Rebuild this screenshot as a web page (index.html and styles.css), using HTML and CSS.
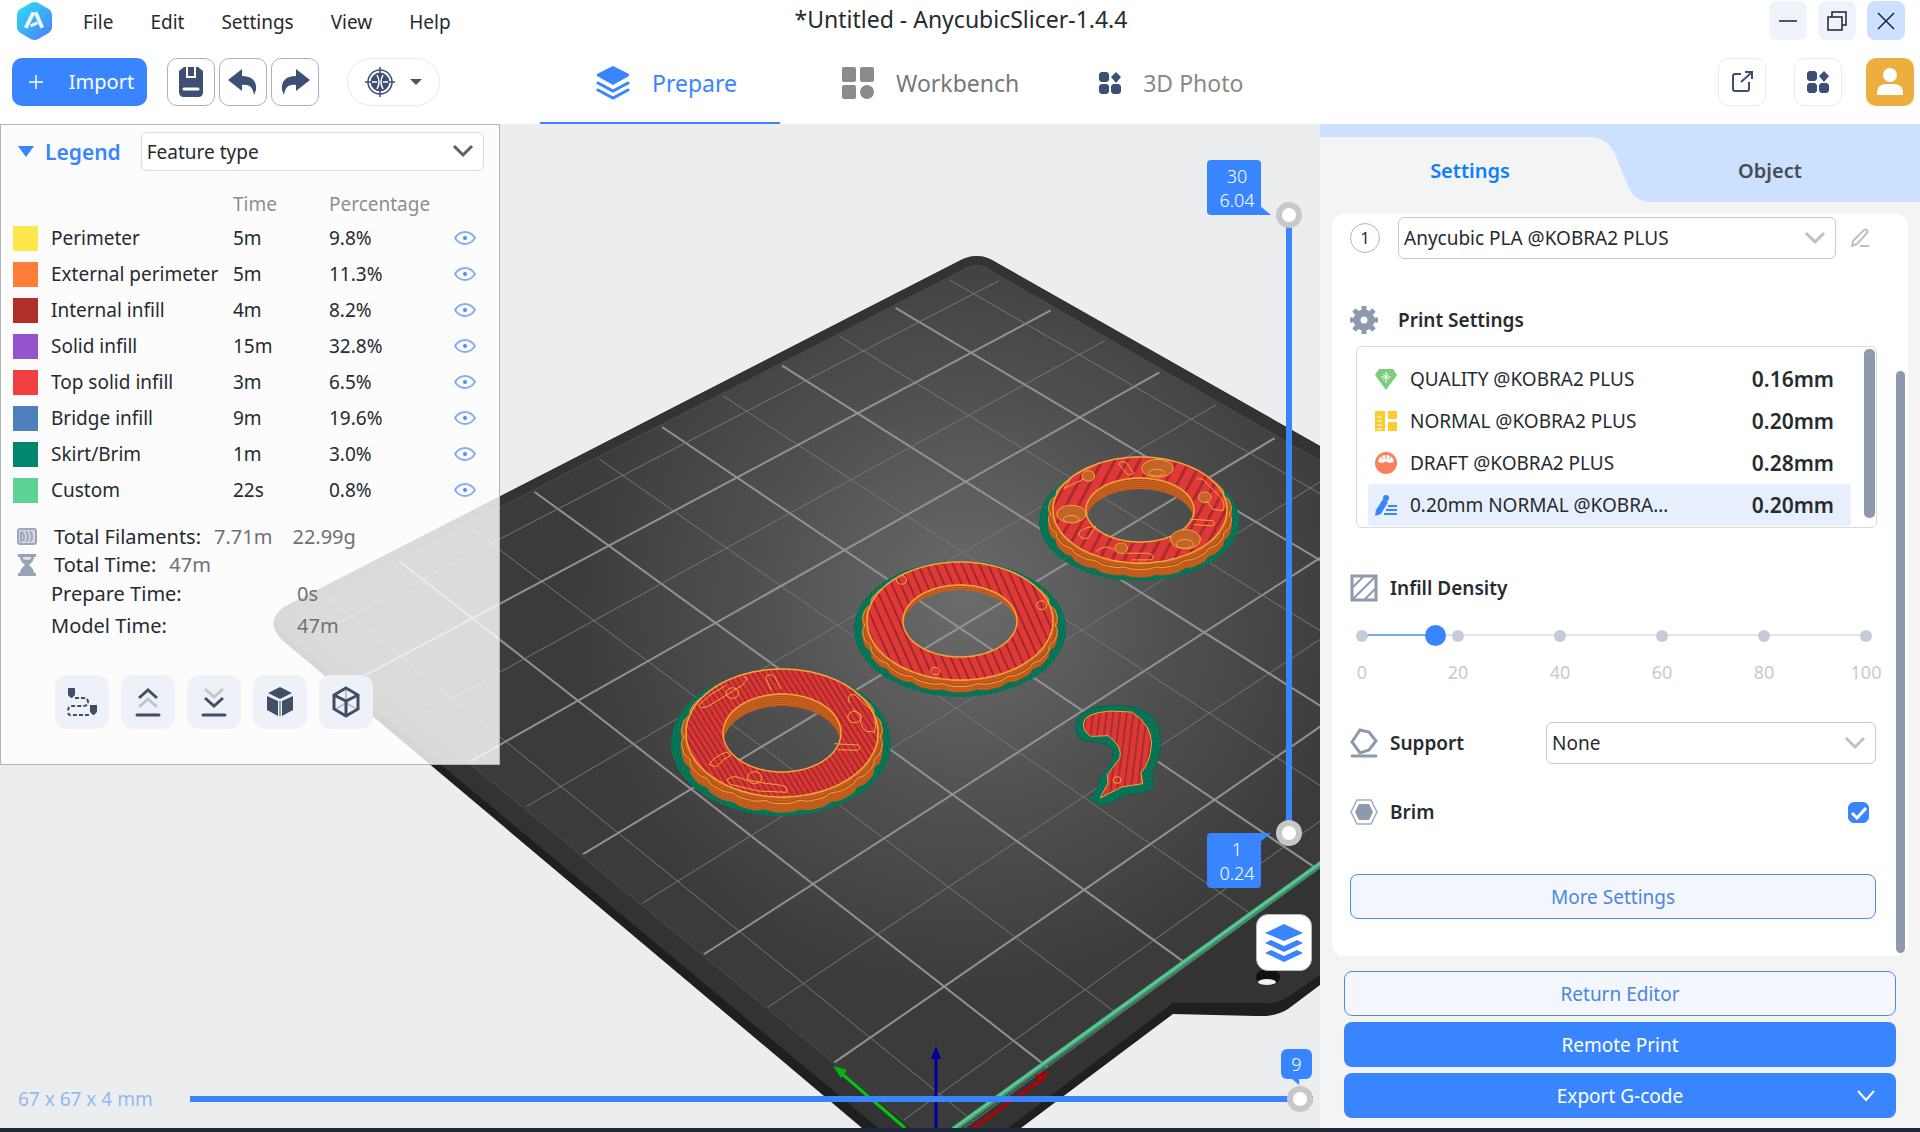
FILE: index.html
```html
<!DOCTYPE html>
<html lang="en">
<head>
    <meta charset="UTF-8">
    <meta name="viewport" content="width=device-width, initial-scale=1.0">
    <title>*Untitled - AnycubicSlicer-1.4.4</title>
    <link rel="stylesheet" href="styles.css">
</head>
<body>

    <!-- shared icons -->
    <svg class="sprite" aria-hidden="true">
        <symbol id="eye" viewBox="0 0 22 14">
            <path d="M1 7C4 2.500 7.500 1 11 1s7 1.500 10 6c-3 4.500-6.500 6-10 6S4 11.500 1 7z" fill="none" stroke="#85aef8" stroke-width="2"/>
            <circle cx="11" cy="7" r="2" fill="#4f8cf5"/>
        </symbol>
        <symbol id="chevron" viewBox="0 0 22 14">
            <path d="M2 2l9 9 9-9" fill="none" stroke="currentColor" stroke-width="3"/>
        </symbol>
        <symbol id="layers" viewBox="0 0 34 34">
            <path d="M17 0l16 8v2l-16 9L1 10V8z" fill="currentColor"/>
            <path d="M2 17l15 8 15-8M2 24l15 8 15-8" fill="none" stroke="currentColor" stroke-width="3" stroke-linecap="round"/>
        </symbol>
        <symbol id="apps" viewBox="0 0 22 22">
            <path d="M2 0h6l2 2v6l-2 2H2L0 8V2zM2 12h6l2 2v6l-2 2H2l-2-2v-6zM14 12h6l2 2v6l-2 2h-6l-2-2v-6zM17 0l5 5-5 6-5-6z" fill="#3d4f75"/>
        </symbol>
        <symbol id="undo" viewBox="0 0 30 28">
            <path d="M0 12L14 1v7c10 0 15 5 14 14l-2 5c-1-7-4-11-12-10v6z" fill="#3d4f75"/>
        </symbol>
    </svg>

    <header class="titlebar">
        <div class="titlebar-left">
            <svg class="logo" viewBox="0 0 36 40">
                <defs>
                    <linearGradient id="logoFill" x1="0" y1="0" x2="1" y2="1">
                        <stop offset="0" stop-color="#2be0f5"/>
                        <stop offset="1" stop-color="#4a7dfb"/>
                    </linearGradient>
                </defs>
                <path d="M15 1q3-1 6 0l12 7q3 2 3 5v14q0 3-3 5l-12 7q-3 1-6 0L3 32q-3-2-3-5V13q0-3 3-5z" fill="url(#logoFill)"/>
                <path d="M17 11L9 27M19 11l7 16" stroke="#eef8ff" stroke-width="4" fill="none"/>
                <path d="M14 25l7-3" stroke="#eef8ff" stroke-width="3"/>
            </svg>
            <nav class="menu">
                <a href="#">File</a>
                <a href="#">Edit</a>
                <a href="#">Settings</a>
                <a href="#">View</a>
                <a href="#">Help</a>
            </nav>
        </div>
        <h1 class="title">*Untitled - AnycubicSlicer-1.4.4</h1>
        <div class="window-buttons">
            <button type="button" aria-label="Minimize"><svg width="20" height="20" viewBox="0 0 20 20"><path d="M1 10h18" stroke="#1c2330" stroke-width="1.500"/></svg></button>
            <button type="button" aria-label="Restore"><svg width="20" height="20" viewBox="0 0 20 20"><path d="M1 6h14v13H1zM5 6V1h14v13h-4" fill="none" stroke="#1c2330" stroke-width="1.500"/></svg></button>
            <button type="button" class="close" aria-label="Close"><svg width="20" height="20" viewBox="0 0 20 20"><path d="M2 2l16 16M18 2L2 18" stroke="#1c2330" stroke-width="1.500"/></svg></button>
        </div>
    </header>

    <div class="toolbar">
        <div class="toolbar-left">
            <button type="button" class="import"><svg width="14" height="14" viewBox="0 0 14 14"><path d="M7 0v14M0 7h14" stroke="#fff" stroke-width="1.500"/></svg>Import</button>
            <div class="tool-group">
                <button type="button" class="tool" aria-label="Save">
                    <svg width="24" height="30" viewBox="0 0 24 30"><path d="M5 0h2v11h10V0h2l5 4v21q0 5-5 5H5q-5 0-5-5V4z" fill="#3d4f75"/><path d="M9 0h6v9H9z" fill="#3d4f75"/><path d="M5 22h14" stroke="#fff" stroke-width="3" stroke-linecap="round"/></svg>
                </button>
                <button type="button" class="tool" aria-label="Undo"><svg width="30" height="28"><use href="#undo"/></svg></button>
                <button type="button" class="tool" aria-label="Redo"><svg class="flip" width="30" height="28"><use href="#undo"/></svg></button>
            </div>
            <button type="button" class="calibrate" aria-label="Calibration">
                <svg width="30" height="30" viewBox="0 0 30 30" fill="none" stroke="#3d4f75">
                    <circle cx="15" cy="15" r="12" stroke-width="1.500"/>
                    <circle cx="15" cy="15" r="9" fill="#3d4f75"/>
                    <path d="M15 0v6M15 24v6M0 15h6M24 15h6" stroke-width="1.500"/>
                    <path d="M12 8q4 7 0 14M18 8q-4 7 0 14M7 15h5M18 15h5" stroke="#fff" stroke-width="1.500"/>
                </svg>
                <svg width="12" height="8" viewBox="0 0 12 8"><path d="M0 1h12L6 7z" fill="#555"/></svg>
            </button>
        </div>
        <nav class="tabs">
            <a href="#" class="tab active"><svg width="34" height="34"><use href="#layers"/></svg>Prepare</a>
            <a href="#" class="tab workbench">
                <svg width="32" height="32" viewBox="0 0 32 32" fill="#8b8b8b"><rect width="14" height="15" rx="2"/><rect x="18" width="14" height="15" rx="2"/><rect y="18" width="14" height="14" rx="2"/><circle cx="25" cy="25" r="7"/></svg>
                Workbench</a>
            <a href="#" class="tab photo"><svg width="22" height="22"><use href="#apps"/></svg>3D Photo</a>
        </nav>
        <div class="toolbar-right">
            <button type="button" class="square" aria-label="Share">
                <svg width="22" height="22" viewBox="0 0 22 22" fill="none" stroke="#3d4f75" stroke-width="2"><path d="M10 3H4Q2 3 2 5v13q0 2 2 2h12q2 0 2-2v-7M10 11l10-9M14 1h7v7"/></svg>
            </button>
            <button type="button" class="square" aria-label="Apps"><svg width="22" height="22"><use href="#apps"/></svg></button>
            <button type="button" class="square avatar" aria-label="Account">
                <svg width="26" height="28" viewBox="0 0 26 28" fill="#fff"><circle cx="13" cy="7" r="7"/><path d="M0 27v-4q1-6 8-7h10q7 1 8 7v4z"/></svg>
            </button>
        </div>
    </div>

    <main class="workspace">
        <section class="viewport">
            <!-- print bed, grid and sliced parts are added by scene.js -->
            <svg class="scene" viewBox="0 124 1320 1004" preserveAspectRatio="xMidYMid slice">
                <defs>
                    <radialGradient id="bedFill" gradientUnits="userSpaceOnUse" cx="965" cy="600" r="400">
                        <stop offset="0" stop-color="#6b6b6b"/>
                        <stop offset="0.500" stop-color="#515151"/>
                        <stop offset="1" stop-color="#3b3b3b"/>
                    </radialGradient>
                    <pattern id="fine" width="5" height="5" patternUnits="userSpaceOnUse" patternTransform="rotate(-32)">
                        <rect width="5" height="5" fill="#dc3636"/><rect width="2" height="5" fill="#a82a2a"/>
                    </pattern>
                    <pattern id="medium" width="8" height="8" patternUnits="userSpaceOnUse" patternTransform="rotate(-24)">
                        <rect width="8" height="8" fill="#de3838"/><rect width="2" height="8" fill="#a22828"/>
                    </pattern>
                    <pattern id="wide" width="11" height="11" patternUnits="userSpaceOnUse" patternTransform="rotate(28)">
                        <rect width="11" height="11" fill="#e03838"/><rect width="3" height="11" fill="#aa2b2b"/>
                    </pattern>
                    <pattern id="straight" width="17" height="17" patternUnits="userSpaceOnUse" patternTransform="rotate(6)">
                        <rect width="17" height="17" fill="#dc3838"/><rect width="5" height="17" fill="#a82c2c"/>
                    </pattern>
                    <pattern id="brim" width="3" height="3" patternUnits="userSpaceOnUse" patternTransform="rotate(12)">
                        <rect width="3" height="3" fill="#087a5b"/><rect width="1" height="3" fill="#06664c"/>
                    </pattern>
                </defs>

                <path d="M963 259q14-6 27 0L1320 446v539l-32 24q-12 8-32 7l-83-2L1021 1128H862L282 640q-18-18 2-33z" fill="#1f1f1f"/>
                <path d="M963 259q14-6 27 0L1320 446v529l-32 22q-10 7-24 6h-91L1008 1128H878L284 634q-16-16 2-28z" fill="#333"/>
                <path d="M967 268q10-5 19 0L1630 640 937 1148 300 624q-12-8 0-14z" fill="url(#bedFill)" stroke="#4d4d4d"/>
                <g id="grid"></g>
                <ellipse cx="1268" cy="977" rx="12" ry="8" fill="#111"/>
                <ellipse cx="1267" cy="982" rx="9" ry="3" fill="#f2f2f2"/>
                <path d="M953 1130L1322 863" stroke="#389066" stroke-width="6"/>
                <path d="M953 1129L1322 862" stroke="#5cc592" stroke-width="3"/>
                <path d="M905 1128l-64-55" stroke="#00c80f" stroke-width="3"/>
                <path d="M833 1066l14 4-6 8z" fill="#00b40f"/>
                <path d="M973 1128l68-48" stroke="#b80000" stroke-width="3"/>
                <path d="M1049 1072l-14 3 6 8z" fill="#b00000"/>
                <path d="M936 1130v-72" stroke="#00009c" stroke-width="3"/>
                <path d="M936 1046l5 13h-10z" fill="#00009c"/>
                <g id="parts"></g>

                <!-- the small hook part and the pockets on the rings, in a finer unit -->
                <g class="details" transform="translate(640 440) scale(0.395 0.333)">
                    <path class="skirt" d="M1102 855Q1110 805 1180 798 1265 790 1295 830 1325 870 1317 925 1312 970 1296 1000L1300 1042Q1290 1060 1240 1062L1175 1097Q1150 1095 1137 1075 1160 1060 1162 1015 1200 970 1198 930 1180 905 1125 905 1100 890 1102 855z"/>
                    <path class="hook" d="M1123 850Q1125 820 1190 814L1245 817Q1295 855 1295 910 1292 970 1268 1000L1273 1032 1220 1042 1165 1075 1185 1030 1183 1005 1215 955Q1222 920 1185 888L1142 890Q1120 875 1123 850z"/>
                    <circle cx="1208" cy="1021" r="10"/>
                    <path d="M318 712q12-14 24 0l14 36M332 752l-14-40M175 975q12-25 45-38l10 10q-24 14-36 34zM492 912l60 4q8 8 0 16l-50-2M262 712q20-2-5 26l-85 62q-22 10-22-5l28-30 40-28"/>
                    <circle cx="234" cy="760" r="16"/><circle cx="543" cy="832" r="17"/><circle cx="290" cy="1014" r="18"/>
                    <path d="M530 790q-8-30 14-25l38 42q20 30 12 70l-22-2q-20-25-12-45l-22-25M220 1020q16-18 44 0l60 12q50 4 48 16v10l-72-4-72-20z"/>
                    <circle cx="662" cy="420" r="13"/><circle cx="1017" cy="496" r="13"/><circle cx="747" cy="694" r="11"/>
                    <g class="pocket">
                        <ellipse cx="1310" cy="85" rx="40" ry="27"/><ellipse cx="1308" cy="98" rx="20" ry="10"/>
                        <ellipse cx="1092" cy="222" rx="37" ry="26"/><ellipse cx="1092" cy="238" rx="20" ry="11"/>
                        <ellipse cx="1381" cy="298" rx="38" ry="29"/><ellipse cx="1379" cy="312" rx="22" ry="13"/>
                        <circle cx="1135" cy="108" r="16"/><circle cx="1430" cy="172" r="16"/><circle cx="1218" cy="325" r="16"/>
                    </g>
                    <path d="M1212 72q10-14 22 0l16 28-14 6zM1110 280q14-20 44-20l-20 34q-18 8-24-14zM1392 238l58 4q8 8 0 16l-48-4M1165 68l-70 40-22 38 52-30M1410 118q14-8 26 14l32 38q16 20 8 42l-26-4-16-26M1155 335q20-24 44-6M1232 340l55 0q20 8 8 20l-50 0"/>
                </g>
            </svg>

            <section class="legend">
                <div class="legend-head">
                    <button type="button" class="legend-toggle"><svg width="16" height="11" viewBox="0 0 16 11"><path d="M0 0h16L8 11z" fill="#3985ff"/></svg>Legend</button>
                    <span class="select">
                        <select aria-label="Color by"><option>Feature type</option></select>
                        <svg width="22" height="14"><use href="#chevron"/></svg>
                    </span>
                </div>
                <table>
                    <thead>
                        <tr><th></th><th></th><th>Time</th><th>Percentage</th><th></th></tr>
                    </thead>
                    <tbody>
                        <tr><td><i class="swatch perimeter"></i></td><td>Perimeter</td><td>5m</td><td>9.8%</td><td><svg width="22" height="14"><use href="#eye"/></svg></td></tr>
                        <tr><td><i class="swatch external"></i></td><td>External perimeter</td><td>5m</td><td>11.3%</td><td><svg width="22" height="14"><use href="#eye"/></svg></td></tr>
                        <tr><td><i class="swatch internal"></i></td><td>Internal infill</td><td>4m</td><td>8.2%</td><td><svg width="22" height="14"><use href="#eye"/></svg></td></tr>
                        <tr><td><i class="swatch solid"></i></td><td>Solid infill</td><td>15m</td><td>32.8%</td><td><svg width="22" height="14"><use href="#eye"/></svg></td></tr>
                        <tr><td><i class="swatch top"></i></td><td>Top solid infill</td><td>3m</td><td>6.5%</td><td><svg width="22" height="14"><use href="#eye"/></svg></td></tr>
                        <tr><td><i class="swatch bridge"></i></td><td>Bridge infill</td><td>9m</td><td>19.6%</td><td><svg width="22" height="14"><use href="#eye"/></svg></td></tr>
                        <tr><td><i class="swatch skirt-brim"></i></td><td>Skirt/Brim</td><td>1m</td><td>3.0%</td><td><svg width="22" height="14"><use href="#eye"/></svg></td></tr>
                        <tr><td><i class="swatch custom"></i></td><td>Custom</td><td>22s</td><td>0.8%</td><td><svg width="22" height="14"><use href="#eye"/></svg></td></tr>
                    </tbody>
                </table>
                <div class="totals">
                    <p>
                        <svg width="20" height="18" viewBox="0 0 20 18" fill="none" stroke="#9fa6bb" stroke-width="2"><rect x="1" y="1" width="18" height="15" rx="2" fill="#d4d8e2"/><path d="M4 4v9q4-1 3-5t-3-4M9 3q4 6 0 11M13 3q4 6 0 11"/></svg>
                        Total Filaments:<span>7.71m</span><span class="weight">22.99g</span>
                    </p>
                    <p>
                        <svg width="20" height="22" viewBox="0 0 20 22" fill="#98a1b5"><path d="M1 0h18v3h-2q0 4-5 8 5 4 5 8h2v3H1v-3h2q0-4 5-8-5-4-5-8H1z"/><path d="M6 3h8v2q-4 2-8 0z" fill="#dfe2ea"/></svg>
                        Total Time:<span>47m</span>
                    </p>
                </div>
                <dl class="times">
                    <dt>Prepare Time:</dt><dd>0s</dd>
                    <dt>Model Time:</dt><dd>47m</dd>
                </dl>
                <div class="view-buttons">
                    <button type="button" aria-label="Travel moves">
                        <svg width="30" height="30" viewBox="0 0 30 30"><path d="M1 1h7v7l-3 3h-1L1 8zM23 18h7v7l-3 3h-1l-3-3z" fill="#3f4f66"/><path d="M8 11h8q5 0 5 4t-5 4H5q-4 0-4 5t4 4h17" fill="none" stroke="#3f4f66" stroke-width="2" stroke-dasharray="4 2"/></svg>
                    </button>
                    <button type="button" aria-label="Layer up">
                        <svg width="26" height="30" viewBox="0 0 26 30" fill="none" stroke-width="3"><path d="M4 11l9-8 9 8" stroke="#3f4f66"/><path d="M4 20l9-8 9 8" stroke="#c2c6cb"/><path d="M2 28h22" stroke="#3f4f66" stroke-linecap="round"/></svg>
                    </button>
                    <button type="button" aria-label="Layer down">
                        <svg width="26" height="30" viewBox="0 0 26 30" fill="none" stroke-width="3"><path d="M4 2l9 8 9-8" stroke="#c2c6cb"/><path d="M4 11l9 8 9-8" stroke="#3f4f66"/><path d="M2 28h22" stroke="#3f4f66" stroke-linecap="round"/></svg>
                    </button>
                    <button type="button" aria-label="Shells">
                        <svg width="28" height="30" viewBox="0 0 28 30" fill="#3f4f66"><path d="M14 0l12 6-12 6L2 6zM1 9l11 5v15L1 23zM27 9l-11 5v15l11-6z"/><path d="M14 14v15" fill="none" stroke="#3f4f66"/></svg>
                    </button>
                    <button type="button" aria-label="Wireframe">
                        <svg width="30" height="32" viewBox="0 0 30 32" fill="none" stroke-width="3"><path d="M15 2v14M3 24l12-7 12 7" stroke="#b9c0ca" stroke-width="2"/><path d="M15 2l12 7v14l-12 7-12-7V9zM3 9l12 6 12-6M15 15v15" stroke="#3f4f66"/></svg>
                    </button>
                </div>
            </section>

            <div class="layer-slider">
                <output class="tip tip-top">30<br>6.04</output>
                <output class="tip tip-bottom">1<br>0.24</output>
                <input type="range" class="upper" min="1" max="30" value="30" aria-label="Top layer">
                <input type="range" class="lower" min="1" max="30" value="1" aria-label="Bottom layer">
            </div>
            <button type="button" class="layers-button" aria-label="Layers">
                <svg width="38" height="38" viewBox="0 0 38 38" fill="#3985ff"><path d="M19 0l19 9-19 8L0 9zM0 19l6-3 13 6 13-6 6 3-19 9zM0 29l6-3 13 6 13-6 6 3-19 9z"/></svg>
            </button>
            <div class="move-slider">
                <label for="moves">67 x 67 x 4 mm</label>
                <input type="range" id="moves" min="1" max="9" value="9">
                <output class="tip tip-move">9</output>
            </div>
        </section>

        <aside class="panel">
            <nav class="panel-tabs">
                <svg viewBox="0 0 600 78" preserveAspectRatio="none"><path d="M0 13h270q18 1 25 17l13 32q6 16 24 16H0z" fill="#f4f4f4"/></svg>
                <a href="#" class="active">Settings</a>
                <a href="#">Object</a>
            </nav>
            <div class="card">
                <div class="filament">
                    <span class="number">1</span>
                    <span class="select">
                        <select aria-label="Filament"><option>Anycubic PLA @KOBRA2 PLUS</option></select>
                        <svg width="22" height="14"><use href="#chevron"/></svg>
                    </span>
                    <button type="button" aria-label="Edit filament"><svg width="20" height="20" viewBox="0 0 20 20" fill="none" stroke="#c0c0c0" stroke-width="2"><path d="M2 18l1-5L14 2q2-1 3 0t0 3L7 16zM10 18h9"/></svg></button>
                </div>

                <h2 class="print-title">
                    <svg width="28" height="28" viewBox="0 0 28 28"><circle cx="14" cy="14" r="7" fill="none" stroke="#8e99af" stroke-width="7"/><path d="M14 0v5M14 23v5M0 14h5M23 14h5M4 4l4 4M20 20l4 4M24 4l-4 4M4 24l4-4" stroke="#8e99af" stroke-width="5"/></svg>
                    Print Settings
                </h2>
                <ul class="profiles">
                    <li>
                        <svg width="22" height="22" viewBox="0 0 22 22"><path d="M4 1h14l4 6-11 15L0 7z" fill="#7bcf7c"/><path d="M11 4v11M6 9h10M8 6l6 6M14 6l-6 6" stroke="#fff"/></svg>
                        <a href="#">QUALITY @KOBRA2 PLUS</a><b>0.16mm</b>
                    </li>
                    <li>
                        <svg width="22" height="22" viewBox="0 0 22 22" fill="#fbcb2f"><path d="M0 1h10v20H0zM13 1h9v8h-9zM13 12h9v9h-9z"/><path d="M2 7h5M2 11h5M2 15h5M2 19h5" stroke="#fff"/></svg>
                        <a href="#">NORMAL @KOBRA2 PLUS</a><b>0.20mm</b>
                    </li>
                    <li>
                        <svg width="22" height="22" viewBox="0 0 22 22"><circle cx="11" cy="11" r="11" fill="#f97f5f"/><path d="M3 10q1-7 8-7t8 7l-5 1q-3-3-6 0z" fill="#fff"/><path d="M11 2v5M6 4l2 3M16 4l-2 3" stroke="#f97f5f"/></svg>
                        <a href="#">DRAFT @KOBRA2 PLUS</a><b>0.28mm</b>
                    </li>
                    <li class="selected">
                        <svg width="22" height="22" viewBox="0 0 22 22" fill="#3985ff"><circle cx="11" cy="4" r="3"/><path d="M8 5l5 3-7 12-6 2 1-6z"/><path d="M13 12h9M11 16h11M9 20h13" stroke="#3985ff" stroke-width="2"/></svg>
                        <a href="#">0.20mm NORMAL @KOBRA…</a><b>0.20mm</b>
                    </li>
                </ul>

                <label class="setting-title infill-title" for="infill">
                    <svg width="28" height="28" viewBox="0 0 28 28" fill="none" stroke="#8e99af" stroke-width="2"><path d="M2 2h24v24H2z" stroke-width="3"/><path d="M3 13L13 3M3 25L25 3M15 25l10-10"/></svg>
                    Infill Density
                </label>
                <div class="infill">
                    <div class="ticks"><i></i><i></i><i></i><i></i><i></i><i></i></div>
                    <input type="range" id="infill" min="0" max="100" value="14">
                    <div class="tick-labels"><span>0</span><span>20</span><span>40</span><span>60</span><span>80</span><span>100</span></div>
                </div>

                <div class="setting support">
                    <label class="setting-title" for="support">
                        <svg width="28" height="30" viewBox="0 0 28 30" fill="none" stroke="#8e99af" stroke-width="3"><path d="M10 2l9 2 7 9-7 9-9 3-8-11z"/><path d="M2 28h24" stroke-linecap="round"/></svg>
                        Support
                    </label>
                    <span class="select">
                        <select id="support"><option>None</option></select>
                        <svg width="22" height="14"><use href="#chevron"/></svg>
                    </span>
                </div>
                <div class="setting brim">
                    <label class="setting-title" for="brimOn">
                        <svg width="28" height="26" viewBox="0 0 28 26"><path d="M7 1h14l6 12-6 12H7L1 13z" fill="none" stroke="#a3abbd" stroke-width="1.500"/><path d="M9 5h10l4 8-4 8H9l-4-8z" fill="#8e99af"/></svg>
                        Brim
                    </label>
                    <span class="check">
                        <input type="checkbox" id="brimOn" checked>
                        <svg width="16" height="14" viewBox="0 0 16 14"><path d="M1 7l5 5 9-10" fill="none" stroke="#fff" stroke-width="3"/></svg>
                    </span>
                </div>
                <button type="button" class="action outline more">More Settings</button>
                <span class="scrollbar"></span>
            </div>
            <div class="actions">
                <button type="button" class="action outline">Return Editor</button>
                <button type="button" class="action">Remote Print</button>
                <button type="button" class="action">Export G-code<svg width="18" height="12" viewBox="0 0 18 12"><path d="M1 1l8 9 8-9" fill="none" stroke="#fff" stroke-width="2"/></svg></button>
            </div>
        </aside>
    </main>

    <script src="scene.js"></script>
</body>
</html>
```
FILE: styles.css
```css
* {
    box-sizing: border-box;
}
body {
    margin: 0;
    min-height: 100vh;
    display: flex;
    flex-direction: column;
    background: #fff;
    border-bottom: 4px solid #1c2a38;
    font-family: "Noto Sans", "Open Sans", sans-serif;
    font-size: 19px;
    line-height: 28px;
    color: #262b30;
}
h1, h2, p, ul, dl, dd {
    margin: 0;
    padding: 0;
}
button, select {
    font: inherit;
    color: inherit;
    background: none;
    border: none;
    padding: 0;
}
button {
    cursor: pointer;
    display: flex;
    align-items: center;
    justify-content: center;
}
a {
    color: inherit;
    text-decoration: none;
}
svg {
    display: block;
    flex: none;
}
.sprite {
    position: absolute;
    width: 0;
    height: 0;
}

/* title bar */
.titlebar {
    display: grid;
    grid-template-columns: 1fr auto 1fr;
    height: 42px;
    padding: 1px 15px 0 17px;
}
.titlebar-left {
    display: flex;
    gap: 31px;
}
.logo {
    width: 35px;
    height: 40px;
}
.menu {
    display: flex;
    align-items: center;
    gap: 37px;
}
.title {
    font-size: 23px;
    font-weight: 400;
    line-height: 36px;
}
.window-buttons {
    display: flex;
    justify-content: flex-end;
    gap: 11px;
}
.window-buttons button {
    width: 38px;
    height: 39px;
    border-radius: 8px;
    background: #f0f2fa;
}
.window-buttons .close {
    background: #cce0ff;
}

/* toolbar */
.toolbar {
    display: flex;
    height: 82px;
    padding-right: 6px;
}
.toolbar-left {
    display: flex;
    flex: none;
    width: 540px;
    padding: 16px 0 0 12px;
}
.import {
    width: 135px;
    height: 48px;
    gap: 26px;
    padding-left: 4px;
    border-radius: 10px;
    background: #3985ff;
    color: #fff;
    font-size: 20px;
}
.tool-group {
    display: flex;
    gap: 4px;
    margin: 0 28px 0 20px;
}
.tool {
    width: 48px;
    height: 48px;
    border: 1px solid #a9b1c4;
    border-radius: 10px;
}
.flip {
    transform: scaleX(-1);
}
.calibrate {
    width: 93px;
    height: 48px;
    gap: 15px;
    border: 1px solid #e8e9ec;
    border-radius: 24px;
}
.tabs {
    display: flex;
    font-size: 23px;
    color: #777;
}
.tab {
    display: flex;
    align-items: center;
    gap: 22px;
}
.tab.active {
    width: 240px;
    padding-left: 56px;
    border-bottom: 2px solid #3985ff;
    border-top: 2px solid transparent;
    color: #3985ff;
}
.workbench {
    margin-left: 62px;
}
.photo {
    margin-left: 80px;
    color: #888;
}
.toolbar-right {
    display: flex;
    gap: 28px;
    margin-left: auto;
    padding-top: 16px;
}
.square {
    width: 48px;
    height: 48px;
    border: 1px solid #ececee;
    border-radius: 10px;
}
.avatar {
    margin-left: -4px;
    background: #eeae3f;
    border: none;
}

/* 3D view */
.workspace {
    flex: 1;
    display: flex;
}
.viewport {
    position: relative;
    flex: 1;
    min-width: 0;
    overflow: hidden;
    background: #ecedef;
}
.scene {
    position: absolute;
    inset: 0;
    width: 100%;
    height: 100%;
}
.thin {
    stroke: #777;
    stroke-width: 1;
}
.bold {
    stroke: #929292;
    stroke-width: 2;
}
.details path, .details circle, .details ellipse {
    fill: none;
    stroke: #f5a53a;
    stroke-width: 1;
    vector-effect: non-scaling-stroke;
}
.details .pocket ellipse, .details .pocket circle {
    fill: #c2632a;
}
.details .skirt {
    fill: url(#brim);
    stroke: #06664c;
}
.details .hook {
    fill: url(#straight);
}

/* legend */
.legend {
    position: absolute;
    top: 0;
    left: 0;
    width: 500px;
    height: 641px;
    padding: 7px 15px 0 12px;
    border: 1px solid #b0b4bb;
    background: rgba(255, 255, 255, 0.82);
}
.legend-head {
    display: flex;
    align-items: center;
    gap: 20px;
    padding-left: 5px;
}
.legend-toggle {
    gap: 11px;
    font-size: 21px;
    font-weight: 600;
    color: #3985ff;
}
.select {
    position: relative;
    flex: 1;
    display: block;
    color: #bfc0c4;
}
.select select {
    appearance: none;
    display: block;
    width: 100%;
    height: 42px;
    padding: 0 40px 0 5px;
    border: 1px solid #c3c9d6;
    border-radius: 6px;
    background: #fff;
    color: #262b30;
}
.select svg {
    position: absolute;
    right: 10px;
    top: 14px;
    pointer-events: none;
}
.legend .select {
    color: #5c6068;
}
.legend .select select {
    height: 39px;
    border-color: #d8dae2;
}
.legend .select svg {
    top: 12px;
}
.legend table {
    width: 100%;
    margin-top: 17px;
    border-collapse: collapse;
    table-layout: fixed;
}
.legend th, .legend td {
    height: 36px;
    padding: 0;
    text-align: left;
    font-weight: 400;
    white-space: nowrap;
}
.legend th {
    height: 32px;
    color: #8c8f92;
}
.legend th:nth-child(1) {
    width: 38px;
}
.legend th:nth-child(2) {
    width: 182px;
}
.legend th:nth-child(3) {
    width: 96px;
}
.legend th:nth-child(4) {
    width: 125px;
}
.swatch {
    display: block;
    width: 25px;
    height: 25px;
}
.perimeter { background: #ffe64d; }
.external { background: #ff7d38; }
.internal { background: #b03029; }
.solid { background: #9654cc; }
.top { background: #f04040; }
.bridge { background: #4d80ba; }
.skirt-brim { background: #00876e; }
.custom { background: #5ed194; }
.totals {
    margin-top: 15px;
    padding-left: 4px;
    font-size: 20px;
}
.totals p {
    display: flex;
    align-items: center;
}
.totals p svg {
    margin-right: 17px;
}
.totals span {
    margin-left: 13px;
    color: #6e7173;
}
.totals .weight {
    margin-left: 20px;
}
.times {
    display: grid;
    grid-template-columns: 246px 1fr;
    row-gap: 4px;
    margin-top: 1px;
    padding-left: 38px;
    font-size: 20px;
}
.times dd {
    color: #6e7173;
}
.view-buttons {
    display: flex;
    gap: 12px;
    margin: 35px 0 0 42px;
}
.view-buttons button {
    width: 54px;
    height: 54px;
    border-radius: 12px;
    background: #eff1f8;
}

/* sliders over the view */
input[type="range"] {
    appearance: none;
    margin: 0;
    background: none;
}
.layer-slider input::-webkit-slider-thumb, .move-slider input::-webkit-slider-thumb {
    appearance: none;
    width: 26px;
    height: 26px;
    border: 6px solid #c8c8ca;
    border-radius: 50%;
    background: #fff;
    pointer-events: auto;
}
.layer-slider {
    position: absolute;
    top: 78px;
    right: 18px;
    width: 26px;
    height: 644px;
    background: linear-gradient(#3985ff, #3985ff) center / 6px 620px no-repeat;
}
.layer-slider input {
    position: absolute;
    inset: 0;
    width: 26px;
    height: 100%;
    writing-mode: vertical-lr;
    direction: rtl;
    pointer-events: none;
}
.tip {
    position: absolute;
    background: #3985ff;
    border-radius: 4px;
    color: #fff;
    font-size: 18px;
    font-weight: 300;
    line-height: 24px;
    text-align: center;
}
.tip::after {
    content: "";
    position: absolute;
    width: 12px;
    height: 10px;
    background: #3985ff;
}
.layer-slider .tip {
    right: 41px;
    width: 54px;
    padding: 4px 0 3px 6px;
}
.tip-top {
    top: -42px;
}
.tip-bottom {
    bottom: -42px;
}
.tip-top::after {
    right: -10px;
    bottom: 0;
    clip-path: polygon(0 0, 100% 100%, 0 100%);
}
.tip-bottom::after {
    right: -10px;
    top: 0;
    clip-path: polygon(0 0, 100% 0, 0 100%);
}
.layers-button {
    position: absolute;
    right: 8px;
    bottom: 157px;
    width: 56px;
    height: 57px;
    border: 1px solid #b8b8b8;
    border-radius: 12px;
    background: #fff;
}
.move-slider {
    position: absolute;
    left: 18px;
    right: 7px;
    bottom: 15px;
    display: flex;
    align-items: center;
}
.move-slider label {
    width: 172px;
    color: #94b8f3;
}
.move-slider input {
    flex: 1;
    height: 26px;
    background: linear-gradient(#3985ff, #3985ff) center / 100% 6px no-repeat;
}
.tip-move {
    right: 1px;
    bottom: 34px;
    width: 31px;
    padding: 3px 0;
    border-radius: 6px;
}
.tip-move::after {
    right: 8px;
    bottom: -6px;
    height: 6px;
    clip-path: polygon(0 0, 60% 0, 60% 100%);
}

/* settings panel */
.panel {
    display: flex;
    flex-direction: column;
    flex: none;
    width: 600px;
    background: #f4f4f4;
}
.panel-tabs {
    position: relative;
    display: flex;
    height: 78px;
    padding-top: 14px;
    background: #cce0ff;
    font-size: 20px;
    font-weight: 600;
    color: #474d54;
}
.panel-tabs svg {
    position: absolute;
    inset: 0;
    width: 100%;
    height: 100%;
}
.panel-tabs a {
    position: relative;
    flex: 1;
    line-height: 66px;
    text-align: center;
}
.panel-tabs .active {
    color: #0a80ff;
}
.card {
    position: relative;
    flex: 1;
    margin: 12px 12px 15px;
    padding: 3px 32px 36px 18px;
    border-radius: 12px;
    background: #fff;
}
.filament {
    display: flex;
    align-items: center;
    gap: 14px;
    margin-right: 6px;
}
.number {
    width: 30px;
    height: 30px;
    margin-right: 4px;
    border: 1px solid #b5b5b5;
    border-radius: 50%;
    font-size: 16px;
    text-align: center;
}
.print-title, .setting-title {
    display: flex;
    align-items: center;
    gap: 12px;
    font-size: 19px;
    font-weight: 600;
}
.print-title {
    gap: 20px;
    margin-top: 47px;
}
.profiles {
    position: relative;
    list-style: none;
    margin: 12px -1px 0 6px;
    height: 182px;
    padding: 11px 25px 0 11px;
    border: 1px solid #d9dbe0;
    border-radius: 6px;
}
.profiles::after {
    content: "";
    position: absolute;
    right: 1px;
    top: 2px;
    width: 11px;
    height: 169px;
    border-radius: 5px;
    background: #8e99af;
}
.profiles li {
    display: flex;
    align-items: center;
    height: 42px;
    padding: 0 17px 0 7px;
    border-radius: 4px;
}
.profiles li svg {
    margin-right: 13px;
}
.profiles b {
    margin-left: auto;
    font-size: 21px;
    font-weight: 600;
}
.profiles .selected {
    background: #e7effd;
}
.infill-title {
    margin-top: 46px;
}
.infill {
    position: relative;
    margin: 23px 4px 0 6px;
}
.infill::before {
    content: "";
    position: absolute;
    top: 9px;
    left: 6px;
    width: 504px;
    height: 2px;
    background: linear-gradient(to right, #7ba9f0 74px, #e2e5ec 74px);
}
.infill input {
    position: absolute;
    top: 0;
    left: 0;
    width: 100%;
    height: 21px;
}
.infill input::-webkit-slider-thumb {
    appearance: none;
    width: 21px;
    height: 21px;
    border-radius: 50%;
    background: #3985ff;
}
.ticks, .tick-labels {
    display: grid;
    grid-template-columns: 96px repeat(4, 1fr) 12px;
}
.ticks {
    position: relative;
    height: 21px;
    align-items: center;
}
.ticks i {
    width: 12px;
    height: 12px;
    border-radius: 50%;
    background: #c5cbd8;
}
.tick-labels {
    margin-top: 12px;
    font-size: 18px;
    color: #c5cad6;
}
.tick-labels span {
    width: 36px;
    margin-left: -12px;
    text-align: center;
}
.setting {
    display: flex;
    align-items: center;
    justify-content: space-between;
}
.support {
    margin-top: 36px;
}
.support .select {
    flex: none;
    width: 330px;
}
.brim {
    margin-top: 34px;
    padding-right: 7px;
}
.check {
    position: relative;
}
.check input {
    appearance: none;
    display: block;
    width: 21px;
    height: 21px;
    margin: 0;
    border: 1px solid #c3c9d6;
    border-radius: 6px;
}
.check input:checked {
    border-color: #3985ff;
    background: #3985ff;
}
.check svg {
    position: absolute;
    left: 3px;
    top: 4px;
    pointer-events: none;
}
.action {
    position: relative;
    width: 100%;
    height: 45px;
    border-radius: 8px;
    background: #3985ff;
    color: #fff;
}
.action.outline {
    border: 1px solid #4a8bea;
    background: #f3f6fd;
    color: #4b87e0;
}
.action svg {
    position: absolute;
    right: 21px;
}
.more {
    margin-top: 48px;
}
.scrollbar {
    position: absolute;
    right: 3px;
    top: 157px;
    bottom: 3px;
    width: 9px;
    border-radius: 5px;
    background: #8e99af;
}
.actions {
    display: flex;
    flex-direction: column;
    gap: 6px;
    padding: 0 24px 10px;
}
```
FILE: scene.js
```js
const SVG = 'http://www.w3.org/2000/svg';
const HALF = 5.47; // half of the bed, in grid cells

function add(parent, name, attrs) {
    const el = document.createElementNS(SVG, name);
    for (const key in attrs) {
        el.setAttribute(key, attrs[key]);
    }
    parent.appendChild(el);
}

// bed coordinates to the camera view
function project(a, b) {
    const w = 1 + 0.01615 * a + 0.01696 * b;
    return [(959.5 + 78.24 * a - 43.15 * b) / w, (627.7 - 27.6 * a - 29.45 * b) / w];
}

const grid = document.getElementById('grid');
function gridLine(from, to, bold) {
    const [x1, y1] = project(...from);
    const [x2, y2] = project(...to);
    add(grid, 'line', { x1, y1, x2, y2, class: bold ? 'bold' : 'thin' });
}
for (let i = -5; i <= 5; i++) {
    gridLine([i, -HALF], [i, HALF], i % 2 === 0);
    gridLine([-HALF, i], [HALF, i], i % 2 === 0);
}
gridLine([-HALF, -HALF], [HALF, -HALF], false);

// closed outline of an ellipse with a scalloped rim
function outline(cx, cy, rx, ry, bump) {
    let d = '';
    for (let t = 0; t < 180; t++) {
        const angle = t * Math.PI / 90;
        const r = 1 - bump * Math.pow(Math.abs(Math.cos(angle * 9)), 8);
        d += (t ? 'L' : 'M') + (cx + rx * r * Math.cos(angle)).toFixed(1) + ' ' + (cy + ry * r * Math.sin(angle)).toFixed(1);
    }
    return d + 'z';
}

const rings = [
    { cx: 1140, cy: 510, rx: 87, ry: 53, holeX: 54, holeY: 32, h: 12, depth: 11, brim: [1139, 521, 100, 60], fill: 'wide' },
    { cx: 960, cy: 621, rx: 93, ry: 59, holeX: 57, holeY: 36, h: 10, depth: 5, brim: [960, 629, 106, 68], fill: 'medium' },
    { cx: 782, cy: 733, rx: 96, ry: 64, holeX: 59, holeY: 39, h: 13, depth: 12, brim: [781, 743, 110, 73], fill: 'fine' }
];
const parts = document.getElementById('parts');
rings.forEach(ring => {
    const hole = y => outline(ring.cx, y, ring.holeX, ring.holeY, 0);
    add(parts, 'path', {
        d: outline(...ring.brim, 0) + hole(ring.cy + ring.depth),
        fill: 'url(#brim)', 'fill-rule': 'evenodd'
    });
    // one slice per pixel of height, the lower ones reach further out
    for (let z = ring.h; z > 0; z--) {
        const out = z > 3 ? 5 : 2;
        const drop = Math.min(z, ring.depth);
        add(parts, 'path', {
            d: outline(ring.cx, ring.cy + z, ring.rx + out, ring.ry + out / 2, 0.03) + hole(ring.cy + drop),
            fill: z % 2 ? '#cf6420' : '#b5541b', 'fill-rule': 'evenodd'
        });
        if (z === 4) {
            add(parts, 'path', { d: outline(ring.cx, ring.cy + z, ring.rx + out, ring.ry + out / 2, 0.03), fill: 'none', stroke: '#f0a03a' });
        }
    }
    add(parts, 'path', {
        d: outline(ring.cx, ring.cy, ring.rx, ring.ry, 0) + hole(ring.cy),
        fill: 'url(#' + ring.fill + ')', 'fill-rule': 'evenodd', stroke: '#f5a53a', 'stroke-width': 1.5
    });
});
```
